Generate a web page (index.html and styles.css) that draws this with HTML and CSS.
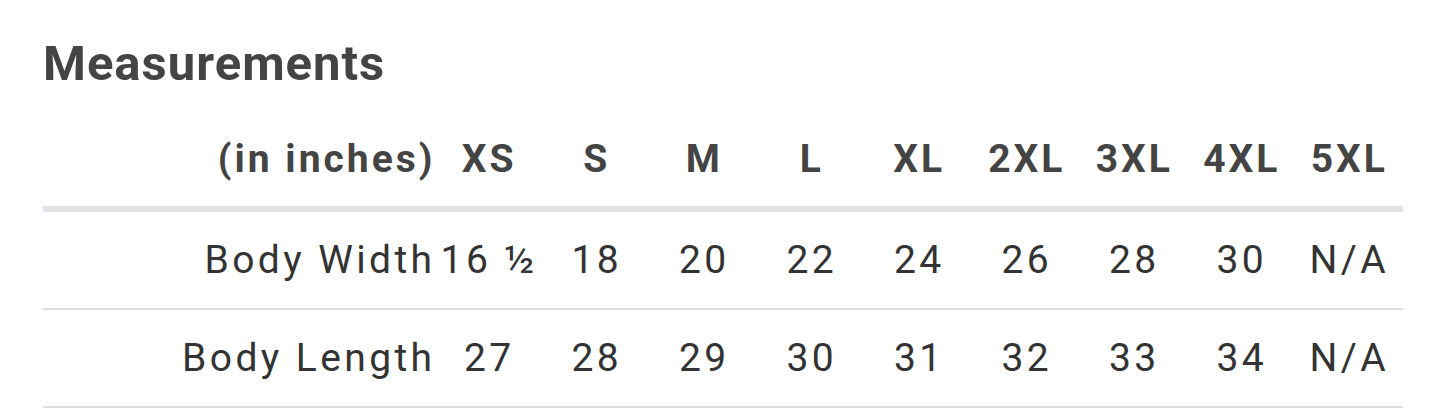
FILE: index.html
```html
<!DOCTYPE html>
<html>
<head>
<meta charset="utf-8">
<link rel="stylesheet" href="styles.css">
</head>
<body>
<div class="wrap">
  <h2 class="title">Measurements</h2>
  <div class="table">
    <div class="row head">
      <div class="label">(in inches)</div>
      <div class="cell">XS</div><div class="cell">S</div><div class="cell">M</div><div class="cell">L</div><div class="cell">XL</div><div class="cell">2XL</div><div class="cell">3XL</div><div class="cell">4XL</div><div class="cell">5XL</div>
    </div>
    <div class="row">
      <div class="label">Body Width</div>
      <div class="cell">16 ½</div><div class="cell">18</div><div class="cell">20</div><div class="cell">22</div><div class="cell">24</div><div class="cell">26</div><div class="cell">28</div><div class="cell">30</div><div class="cell">N/A</div>
    </div>
    <div class="row">
      <div class="label">Body Length</div>
      <div class="cell">27</div><div class="cell">28</div><div class="cell">29</div><div class="cell">30</div><div class="cell">31</div><div class="cell">32</div><div class="cell">33</div><div class="cell">34</div><div class="cell">N/A</div>
    </div>
  </div>
</div>
</body>
</html>
```
FILE: styles.css
```css
html, body {
  margin: 0;
  padding: 0;
  background: #ffffff;
}
body {
  font-family: Roboto, "Liberation Sans", sans-serif;
  color: #333333;
}
.wrap {
  padding: 36px 42px 0 43px;
}
.title {
  margin: 0;
  font-size: 49px;
  line-height: 56px;
  font-weight: 700;
  color: #444444;
  letter-spacing: 1px;
}
.table {
  margin-top: 20px;
  width: 1360px;
}
.row {
  display: grid;
  grid-template-columns: 1fr repeat(9, 107.5px);
  align-items: center;
  height: 96px;
  border-bottom: 2px solid #dcdce2;
}
.row.head {
  height: 94px;
  border-bottom: 6px solid #e2e2e8;
}
.label {
  text-align: right;
  padding-right: 0;
  font-size: 39px;
  letter-spacing: 3.4px;
  white-space: nowrap;
}
.cell {
  text-align: center;
  font-size: 39px;
  letter-spacing: 3.4px;
  white-space: nowrap;
}
.head .label, .head .cell {
  font-weight: 700;
  color: #444444;
  letter-spacing: 3px;
}
.row:not(.head) .label, .row:not(.head) .cell {
  font-weight: 400;
  color: #333333;
}
```
